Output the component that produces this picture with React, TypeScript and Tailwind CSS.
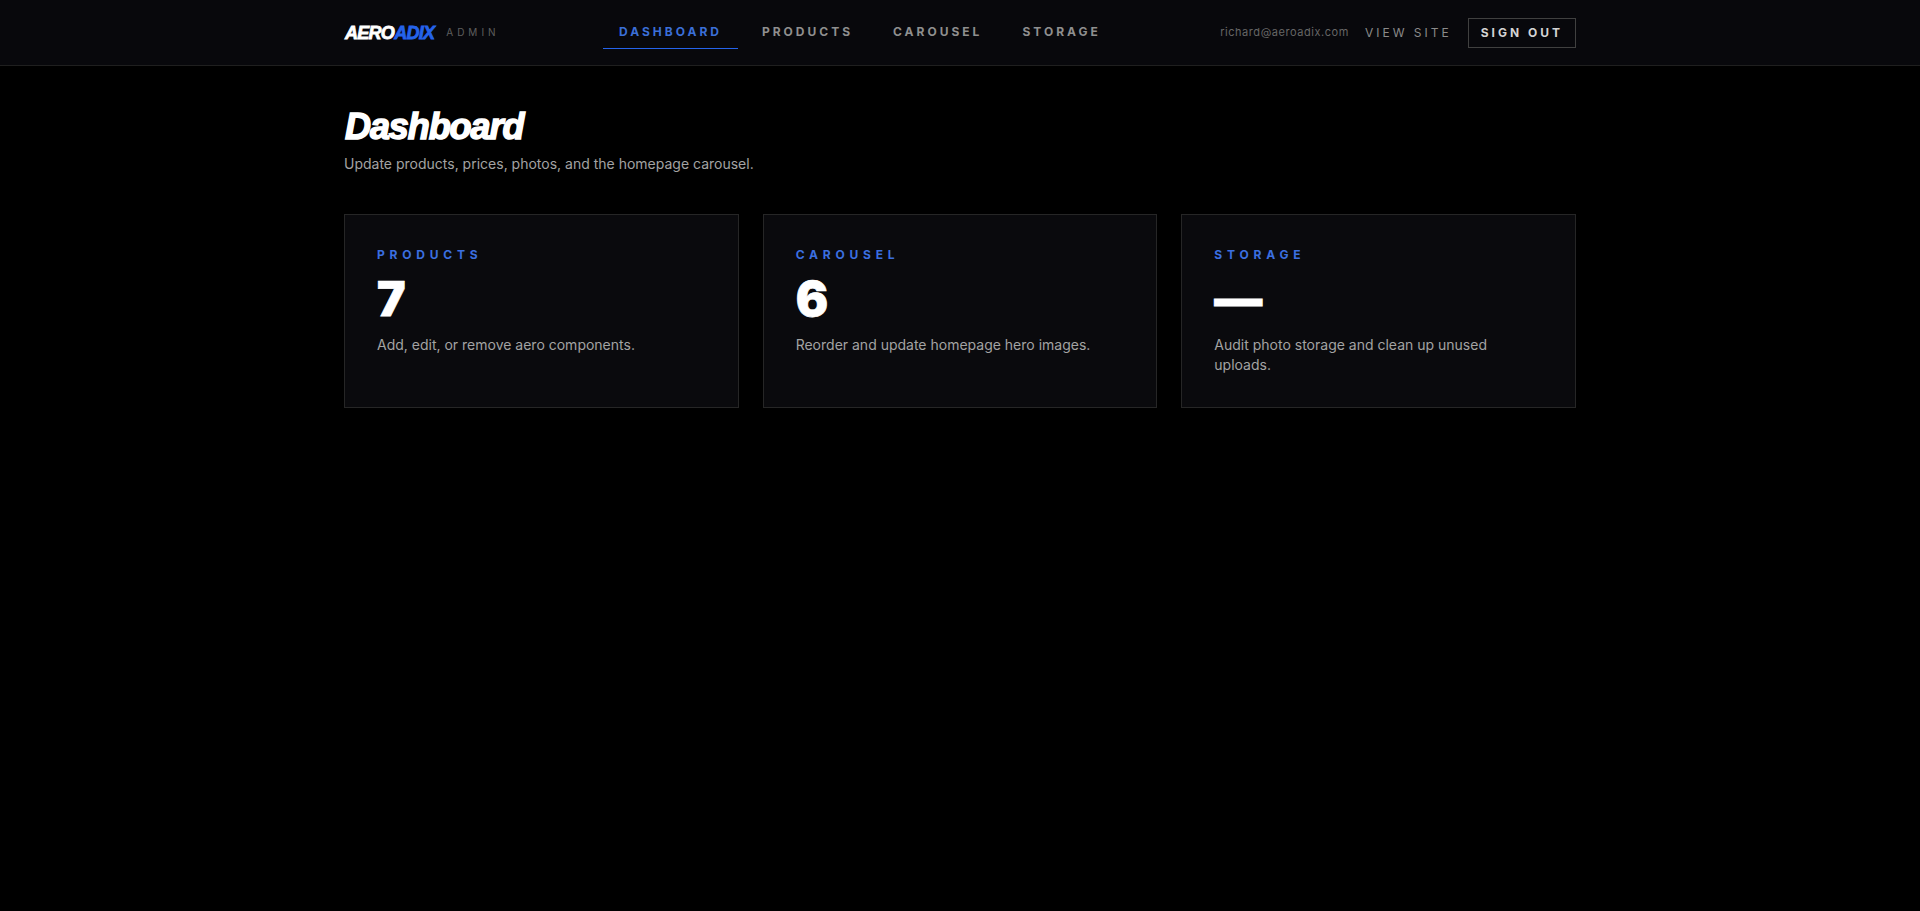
const font = "font-['Inter',sans-serif]";
const display = "font-['Liberation_Sans',sans-serif]";

const navLinks = ["Dashboard", "Products", "Carousel", "Storage"];

const cards = [
  { label: "Products", value: "7", text: "Add, edit, or remove aero components." },
  { label: "Carousel", value: "6", text: "Reorder and update homepage hero images." },
  { label: "Storage", value: "—", text: "Audit photo storage and clean up unused uploads." },
];

const App = () => {
  return (
    <div className={`min-h-screen bg-black text-white ${font}`}>
      {/* HEADER */}
      <header className="bg-[#08080c] border-b border-[#1f1f1f]">
        <div className="max-w-[1280px] mx-auto px-6 py-4 flex items-center justify-between">
          <div className="flex items-center gap-3">
            <span className={`pl-px text-lg font-black italic uppercase tracking-[-0.04em] [-webkit-text-stroke:0.8px_currentColor] ${display}`}>
              Aero<span className="text-[#2563eb]">Adix</span>
            </span>
            <span className="text-[10px] tracking-[0.4em] uppercase text-[#5f5f5f]">Admin</span>
          </div>

          <nav className="flex items-center gap-2">
            {navLinks.map((link, i) => (
              <a
                key={link}
                className={`px-4 py-2 text-xs font-bold tracking-[0.25em] uppercase border-b ${
                  i === 0 ? "text-[#3b6fd8] border-[#2563eb]" : "text-[#8f8f8f] border-transparent"
                }`}
              >
                {link}
              </a>
            ))}
          </nav>

          <div className="flex items-center gap-4">
            <span className="text-[11px] tracking-wider text-[#666666]">richard@aeroadix.com</span>
            <a className="text-xs tracking-[0.25em] uppercase text-[#8a8a8a]">View Site</a>
            <button className="border border-[#404040] px-3 py-1.5 text-xs font-bold tracking-[0.25em] uppercase text-[#d4d4d4]">
              Sign Out
            </button>
          </div>
        </div>
      </header>

      {/* CONTENT */}
      <main className="max-w-[1280px] mx-auto px-6 py-10">
        <h1 className={`pl-px text-4xl leading-[42px] font-black italic tracking-[-0.03em] [-webkit-text-stroke:1.5px_currentColor] ${display}`}>Dashboard</h1>
        <p className="mt-1.5 text-sm text-[#a3a3a3]">Update products, prices, photos, and the homepage carousel.</p>

        <div className="grid grid-cols-3 gap-6 mt-10">
          {cards.map((card) => (
            <div key={card.label} className="bg-[#0a0a0d] border border-[#262626] p-8">
              <p className="text-xs font-bold tracking-[0.4em] uppercase text-[#3b6fe0]">{card.label}</p>
              <p className="mt-3 text-5xl font-black leading-none [-webkit-text-stroke:0.75px_currentColor]">{card.value}</p>
              <p className="mt-3 text-sm text-[#a3a3a3] leading-5">{card.text}</p>
            </div>
          ))}
        </div>
      </main>
    </div>
  );
};

export default App;
